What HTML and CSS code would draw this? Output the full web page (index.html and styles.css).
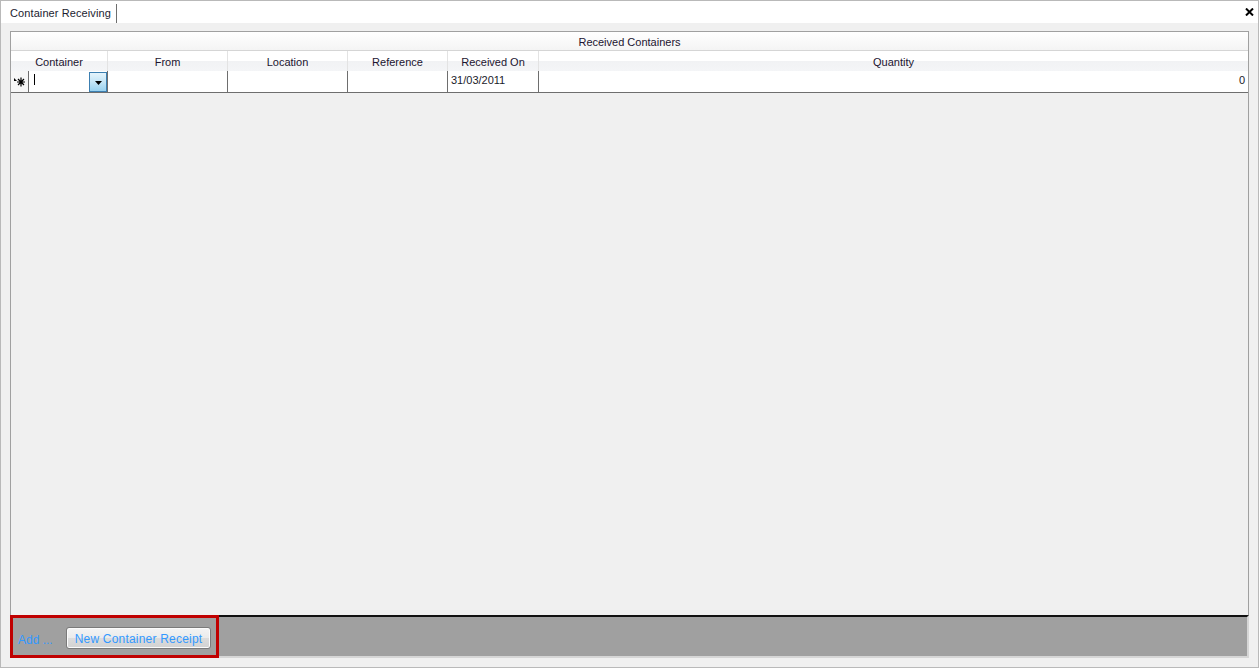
FILE: index.html
```html
<!DOCTYPE html>
<html>
<head>
<meta charset="utf-8">
<link rel="stylesheet" href="styles.css">
</head>
<body>
<div class="window">
  <div class="tabstrip">
    <div class="tab">Container Receiving</div>
    <div class="spacer"></div>
    <svg class="close" width="9" height="8" viewBox="0 0 9 8"><path d="M1 0.5 L8 7.5 M8 0.5 L1 7.5" stroke="#000" stroke-width="2"/></svg>
  </div>
  <div class="content">
    <div class="grid">
      <div class="band">Received Containers</div>
      <div class="row headrow">
        <div class="hc first">Container</div>
        <div class="hc">From</div>
        <div class="hc">Location</div>
        <div class="hc">Reference</div>
        <div class="hc">Received On</div>
        <div class="hc last">Quantity</div>
      </div>
      <div class="row datarow">
        <div class="dc rowhead">
          <svg width="14" height="12" viewBox="0 0 14 12"><path d="M1 2 L4 5 L1 5 Z" fill="#000"/><path d="M8 1.5 V10.5 M4 6 H12 M5 3 L11 9 M11 3 L5 9" stroke="#000" stroke-width="1.2"/></svg>
        </div>
        <div class="dc combo"><span class="caret"></span><span class="ddbtn"><svg width="7" height="4" viewBox="0 0 7 4"><path d="M0 0 H7 L3.5 4 Z" fill="#000"/></svg></span></div>
        <div class="dc"></div>
        <div class="dc"></div>
        <div class="dc"></div>
        <div class="dc date">31/03/2011</div>
        <div class="dc qty">0</div>
      </div>
    </div>
    <div class="panel">
      <div class="redbox">
        <span class="add">Add ...</span>
        <button class="btn">New Container Receipt</button>
      </div>
      <div class="rest"></div>
    </div>
  </div>
</div>
</body>
</html>
```

FILE: styles.css
```css
html, body {
  margin: 0;
  padding: 0;
  background: #f0f0f0;
}
.window {
  width: 1259px;
  height: 668px;
  box-sizing: border-box;
  border: 1px solid #b9b9b9;
  display: flex;
  flex-direction: column;
  font-family: "Liberation Sans", Arial, sans-serif;
  font-size: 11px;
  color: #1a1a2a;
}
.tabstrip {
  height: 22px;
  background: #ffffff;
  display: flex;
  align-items: flex-end;
  padding-left: 2px;
}
.tab {
  height: 19px;
  padding: 0 5px 0 7px;
  border-right: 1px solid #6e6e6e;
  display: flex;
  align-items: center;
  font-size: 11px;
  letter-spacing: 0.1px;
  color: #1c1c30;
  box-sizing: border-box;
  line-height: 19px;
}
.spacer { flex: 1; }
.close {
  align-self: flex-start;
  margin-top: 7px;
  margin-right: 4px;
}
.content {
  flex: 1;
  display: flex;
  flex-direction: column;
  padding: 8px 9px 9px 9px;
  background: #f0f0f0;
}
.grid {
  flex: 1;
  border: 1px solid #a0a0a0;
  border-bottom: none;
  background: #f0f0f0;
  display: flex;
  flex-direction: column;
}
.band {
  height: 18px;
  line-height: 21px;
  text-align: center;
  background: linear-gradient(#ffffff, #f4f4f4);
  border-bottom: 1px solid #d5d5d5;
  color: #1c1430;
}
.row {
  display: grid;
  grid-template-columns: 18px 79px 120px 120px 100px 91px 1fr;
}
.headrow {
  height: 20px;
  background: linear-gradient(#ffffff 0%, #ffffff 50%, #f1f2f4 51%, #f4f5f7 100%);
}
.hc {
  border-right: 1px solid #e3e3e3;
  text-align: center;
  line-height: 23px;
  color: #1c1430;
}
.hc.first { grid-column: span 2; }
.hc.last { border-right: none; }
.datarow {
  box-sizing: border-box;
  height: 22px;
  border-bottom: 1px solid #6e6e6e;
  background: #ffffff;
}
.dc {
  border-right: 1px solid #6e6e6e;
  background: #fff;
}
.rowhead {
  background: #f7f7f7;
  display: flex;
  align-items: center;
  justify-content: center;
}
.combo {
  display: flex;
  align-items: stretch;
  justify-content: space-between;
}
.caret {
  width: 1px;
  background: #000;
  margin: 3px 0 7px 5px;
}
.ddbtn {
  width: 16px;
  border: 1px solid #3c7fb1;
  background: linear-gradient(#e5f4fc, #c4e5f6 50%, #98d1ef);
  display: flex;
  align-items: center;
  justify-content: center;
  margin: 1px 0 0 0;
}
.ddbtn svg { margin-top: 2px; }
.date {
  padding: 3px 0 0 3px;
  color: #1a1a2a;
}
.qty {
  text-align: right;
  padding: 3px 3px 0 0;
  border-right: none;
  color: #1a1a2a;
}
.panel {
  height: 43px;
  display: flex;
}
.redbox {
  width: 209px;
  box-sizing: border-box;
  border: 3px solid #c00000;
  background: #a0a0a0;
  display: flex;
  align-items: flex-start;
  padding: 9px 0 0 5px;
}
.add {
  color: #3399ff;
  font-size: 12px;
  margin-top: 6px;
  width: 48px;
}
.btn {
  width: 145px;
  height: 22px;
  border: 1px solid #7a7a7a;
  border-radius: 3px;
  background: linear-gradient(#f4f4f4, #ebebeb 50%, #dcdcdc 51%, #d2d2d2);
  color: #3399ff;
  font-family: "Liberation Sans", Arial, sans-serif;
  font-size: 12px;
  letter-spacing: 0.2px;
  padding: 1px 0 0 0;
  box-shadow: inset 0 0 0 1px #fbfbfb;
}
.rest {
  flex: 1;
  background: #a0a0a0;
  border-top: 2px solid #101010;
  border-bottom: 2px solid #d6d6d6;
  border-right: 2px solid #d6d6d6;
}
```
